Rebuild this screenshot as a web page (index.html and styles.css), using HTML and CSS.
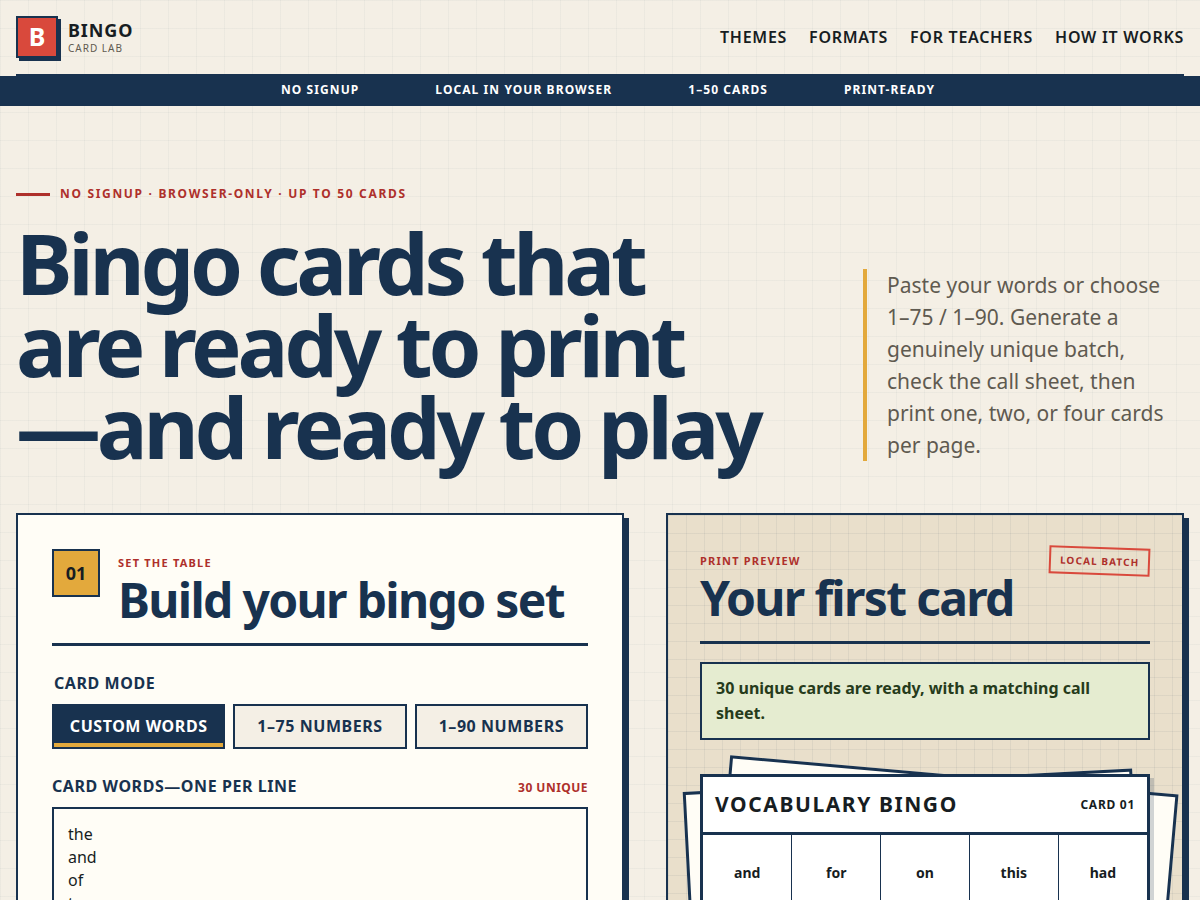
FILE: index.html
```html
<!DOCTYPE html>
<html lang="en">
<head>
<meta charset="utf-8">
<meta name="viewport" content="width=device-width, initial-scale=1">
<title>Bingo Card Lab</title>
<link rel="stylesheet" href="styles.css">
</head>
<body>
<header class="site-header">
  <a class="brand" href="#">
    <span class="brand-mark">B</span>
    <span class="brand-text"><strong>BINGO</strong><small>CARD LAB</small></span>
  </a>
  <nav class="site-nav" aria-label="Main">
    <a href="#themes">THEMES</a>
    <a href="#formats">FORMATS</a>
    <a href="#teachers">FOR TEACHERS</a>
    <a href="#how">HOW IT WORKS</a>
  </nav>
</header>
<ul class="ticker">
  <li>NO SIGNUP</li>
  <li>LOCAL IN YOUR BROWSER</li>
  <li>1–50 CARDS</li>
  <li>PRINT-READY</li>
</ul>
<main class="page">
  <section class="hero">
    <div class="hero-copy">
      <p class="eyebrow">NO SIGNUP · BROWSER-ONLY · UP TO 50 CARDS</p>
      <h1>Bingo cards that are ready to print<br>—and ready to play</h1>
    </div>
    <p class="lead">Paste your words or choose 1–75 / 1–90. Generate a genuinely unique batch, check the call sheet, then print one, two, or four cards per page.</p>
  </section>
  <div class="workbench">
    <form class="panel builder">
      <div class="panel-head">
        <span class="step">01</span>
        <div>
          <p class="kicker">SET THE TABLE</p>
          <h2>Build your bingo set</h2>
        </div>
      </div>
      <fieldset class="modes">
        <legend>CARD MODE</legend>
        <div class="mode-row">
          <button class="mode active" type="button" aria-pressed="true">CUSTOM WORDS</button>
          <button class="mode" type="button" aria-pressed="false">1–75 NUMBERS</button>
          <button class="mode" type="button" aria-pressed="false">1–90 NUMBERS</button>
        </div>
      </fieldset>
      <div class="field-head">
        <label for="words">CARD WORDS—ONE PER LINE</label>
        <span class="count">30 UNIQUE</span>
      </div>
      <textarea id="words" class="words" rows="12">the
and
of
to
a
in
is
it
you
that
he
was
for
on
are
with
as
his
they
be
at
one
have
this
from
or
had
by
but
some</textarea>
    </form>
    <section class="panel preview">
      <div class="panel-head">
        <div>
          <p class="kicker">PRINT PREVIEW</p>
          <h2>Your first card</h2>
        </div>
        <span class="stamp">LOCAL BATCH</span>
      </div>
      <p class="status" role="status">30 unique cards are ready, with a matching call sheet.</p>
      <div class="stack">
        <article class="card">
          <header class="card-head"><h3>VOCABULARY BINGO</h3><span>CARD 01</span></header>
          <table class="grid">
            <tbody>
              <tr><td>and</td><td>for</td><td>on</td><td>this</td><td>had</td></tr>
              <tr><td>the</td><td>his</td><td>are</td><td>one</td><td>by</td></tr>
              <tr><td>of</td><td>was</td><td>FREE</td><td>from</td><td>but</td></tr>
              <tr><td>in</td><td>you</td><td>as</td><td>have</td><td>or</td></tr>
              <tr><td>to</td><td>that</td><td>they</td><td>at</td><td>some</td></tr>
            </tbody>
          </table>
        </article>
      </div>
    </section>
  </div>
</main>
</body>
</html>
```

FILE: styles.css
```css
:root {
  --navy: #18324f;
  --ink: #171d22;
  --muted: #5f5a50;
  --paper: #f4efe5;
  --sheet: #fffdf6;
  --tan: #e9dfcb;
  --red: #d9493c;
  --brick: #ae302b;
  --gold: #e3a93c;
}

* { box-sizing: border-box; }

body {
  margin: 0;
  color: var(--ink);
  font-family: "Noto Sans", sans-serif;
  font-size: 16px;
  line-height: 1.5;
  background-color: var(--paper);
  background-image:
    linear-gradient(rgba(24, 50, 79, 0.035) 1px, transparent 1px),
    linear-gradient(90deg, rgba(24, 50, 79, 0.035) 1px, transparent 1px);
  background-size: 28px 28px;
}

h1, h2, h3, p { margin: 0; }

.site-header {
  display: flex;
  align-items: center;
  justify-content: space-between;
  margin: 0 16px;
  padding: 16px 0;
  border-bottom: 2px solid var(--navy);
}

.brand {
  display: flex;
  align-items: center;
  gap: 10px;
  color: var(--ink);
  text-decoration: none;
}

.brand-mark {
  display: grid;
  place-items: center;
  width: 42px;
  height: 42px;
  border: 2px solid var(--navy);
  background: var(--red);
  box-shadow: 3px 3px 0 var(--navy);
  color: #fff;
  font-size: 25px;
  font-weight: 700;
}

.brand-text {
  display: grid;
  padding-top: 2px;
}

.brand-text strong {
  font-size: 18px;
  line-height: 20px;
  letter-spacing: 0.05em;
}

.brand-text small {
  color: var(--muted);
  font-size: 10px;
  line-height: 16px;
  letter-spacing: 0.1em;
}

.site-nav { display: flex; gap: 22px; }

.site-nav a {
  color: var(--ink);
  font-weight: 600;
  letter-spacing: 0.045em;
  text-decoration: none;
}

.ticker {
  display: flex;
  justify-content: center;
  gap: 76px;
  margin: 0;
  padding: 5px 0 7px 16px;
  background: var(--navy);
  color: #fff;
  font-size: 12px;
  font-weight: 700;
  line-height: 18px;
  letter-spacing: 0.09em;
  list-style: none;
}

.page { padding: 78px 16px 64px; }

.hero {
  display: grid;
  grid-template-columns: minmax(0, 1fr) 321px;
  gap: 48px;
  align-items: end;
}

.eyebrow {
  display: flex;
  align-items: center;
  gap: 10px;
  margin-bottom: 17px;
  color: var(--brick);
  font-size: 12px;
  font-weight: 700;
  line-height: 20px;
  letter-spacing: 0.14em;
}

.eyebrow::before {
  content: "";
  width: 34px;
  height: 3px;
  background: var(--brick);
}

h1 {
  max-width: 760px;
  color: var(--navy);
  font-size: 85px;
  font-weight: 700;
  line-height: 82px;
  letter-spacing: -0.05em;
}

.lead {
  margin-bottom: 6px;
  padding-left: 20px;
  border-left: 4px solid var(--gold);
  color: var(--muted);
  font-size: 21px;
  line-height: 32px;
}

.workbench {
  display: grid;
  grid-template-columns: minmax(0, 27fr) minmax(0, 23fr);
  gap: 42px;
  margin-top: 46px;
}

.panel {
  border: 2px solid var(--navy);
  box-shadow: 5px 5px 0 var(--navy);
}

.builder {
  padding: 34px;
  background: var(--sheet);
}

.preview {
  padding: 32px;
  background-color: var(--tan);
  background-image:
    linear-gradient(rgba(24, 50, 79, 0.06) 1px, transparent 1px),
    linear-gradient(90deg, rgba(24, 50, 79, 0.06) 1px, transparent 1px);
  background-size: 18px 18px;
}

.panel-head {
  display: flex;
  align-items: flex-start;
  gap: 18px;
  padding-bottom: 16px;
  border-bottom: 3px solid var(--navy);
}

.preview .panel-head { justify-content: space-between; }

.step {
  display: grid;
  place-items: center;
  width: 48px;
  height: 48px;
  border: 2px solid var(--navy);
  background: var(--gold);
  font-size: 18px;
  font-weight: 700;
}

.kicker {
  padding-top: 5px;
  color: var(--brick);
  font-size: 11px;
  font-weight: 700;
  line-height: 18px;
  letter-spacing: 0.11em;
}

h2 {
  color: var(--navy);
  font-size: 48px;
  font-weight: 700;
  line-height: 55px;
  letter-spacing: -0.035em;
}

.modes {
  margin: 24px 0 0;
  padding: 0;
  border: 0;
}

.modes legend {
  padding: 0 2px;
  color: var(--navy);
  font-weight: 700;
  line-height: 26px;
  letter-spacing: 0.035em;
}

.mode-row {
  display: grid;
  grid-template-columns: repeat(3, minmax(0, 1fr));
  gap: 8px;
  margin-top: 8px;
}

.mode {
  height: 45px;
  padding: 0 0 2px;
  border: 2px solid var(--navy);
  border-radius: 0;
  background: var(--paper);
  color: var(--navy);
  font: inherit;
  font-weight: 700;
  letter-spacing: 0.035em;
}

.mode.active {
  background: var(--navy);
  box-shadow: inset 0 -4px 0 var(--gold);
  color: #fff;
}

.field-head {
  display: flex;
  align-items: baseline;
  justify-content: space-between;
  margin: 24px 0 6px;
  color: var(--navy);
  font-weight: 700;
  line-height: 26px;
  letter-spacing: 0.035em;
}

.count {
  color: var(--brick);
  font-size: 12px;
  letter-spacing: 0.04em;
}

.words {
  display: block;
  width: 100%;
  padding: 14px;
  border: 2px solid var(--navy);
  border-radius: 0;
  background: var(--sheet);
  color: var(--ink);
  font: inherit;
  line-height: 23px;
  resize: vertical;
}

.stamp {
  padding: 4px 9px;
  border: 2px solid var(--red);
  color: var(--brick);
  font-size: 10px;
  font-weight: 700;
  line-height: 16px;
  letter-spacing: 0.11em;
  white-space: nowrap;
  transform: rotate(2deg);
}

.status {
  margin-top: 18px;
  padding: 12px 14px;
  border: 2px solid var(--navy);
  background: #e5ecd0;
  color: #263b1b;
  font-weight: 700;
  line-height: 25px;
}

.stack {
  position: relative;
  margin-top: 34px;
}

.stack::before,
.stack::after {
  content: "";
  position: absolute;
  inset: 0;
  border: 3px solid var(--navy);
  background: var(--sheet);
}

.stack::before { transform: translate(10px, 0) rotate(5deg); }
.stack::after { transform: translate(-6px, 6px) rotate(-3deg); }

.card {
  position: relative;
  z-index: 1;
  border: 3px solid var(--navy);
  background: #fff;
  box-shadow: 4px 4px 0 rgba(24, 50, 79, 0.2);
}

.card-head {
  display: flex;
  align-items: center;
  justify-content: space-between;
  padding: 12px;
  border-bottom: 3px solid var(--navy);
  font-size: 12px;
  font-weight: 700;
  letter-spacing: 0.06em;
}

.card-head h3 {
  font-size: 21px;
  line-height: 31px;
  letter-spacing: 0.075em;
}

.grid {
  width: 100%;
  border-collapse: collapse;
  table-layout: fixed;
}

.grid td {
  height: 76px;
  padding: 4px;
  border: 1px solid var(--navy);
  font-size: 14px;
  font-weight: 700;
  text-align: center;
}

.grid tr:first-child td { border-top: 0; }
.grid tr:last-child td { border-bottom: 0; }
.grid td:first-child { border-left: 0; }
.grid td:last-child { border-right: 0; }
```
